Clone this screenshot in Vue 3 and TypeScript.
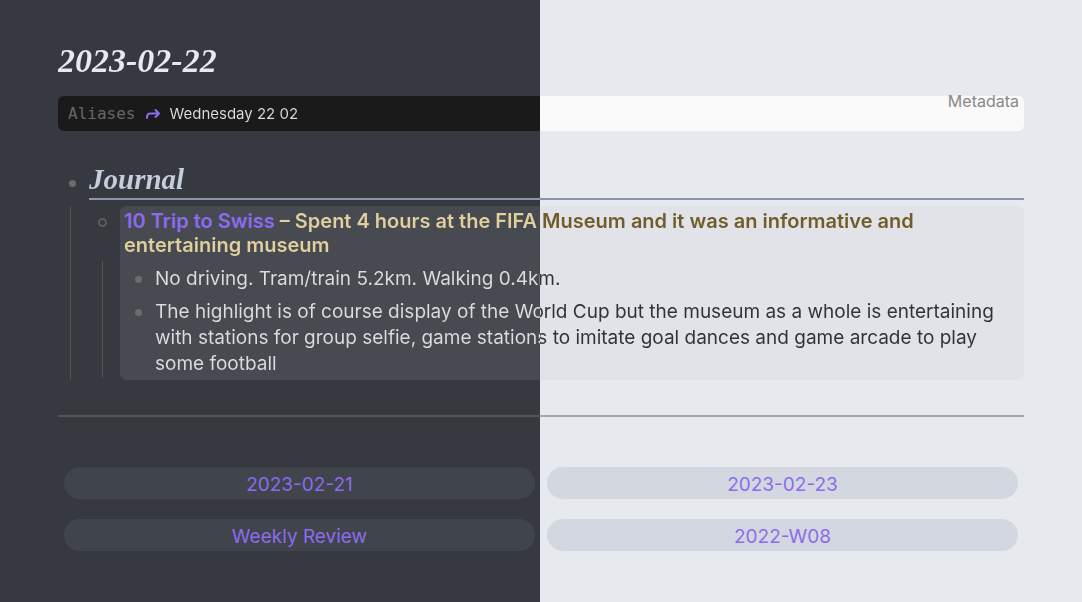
<script setup lang="ts">
interface NoteLink {
  label: string
  href: string
}

const title = '2023-02-22'
const alias = 'Wednesday 22 02'
const notes: string[] = [
  'No driving. Tram/train 5.2km. Walking 0.4km.',
  'The highlight is of course display of the World Cup but the museum as a whole is entertaining with stations for group selfie, game stations to imitate goal dances and game arcade to play some football',
]
const links: NoteLink[] = [
  { label: '2023-02-21', href: '#2023-02-21' },
  { label: '2023-02-23', href: '#2023-02-23' },
  { label: 'Weekly Review', href: '#weekly-review' },
  { label: '2022-W08', href: '#2022-w08' },
]
</script>

<template>
  <main class="page">
    <h1 class="title split-text">{{ title }}</h1>

    <section class="metadata" aria-label="Metadata">
      <dl class="property">
        <dt>Aliases</dt>
        <dd>
          <svg class="arrow" viewBox="0 0 16 16" aria-hidden="true">
            <path d="M2 12V11Q2 7.5 5.5 7.5H14M10.5 4L14 7.5L10.5 11" />
          </svg>
          <span class="split-text">{{ alias }}</span>
        </dd>
      </dl>
      <span class="metadata-label">Metadata</span>
    </section>

    <ul class="outline">
      <li>
        <div class="section-head">
          <span class="dot"></span>
          <h2><span class="split-text">Journal</span></h2>
        </div>
        <ul class="branch">
          <li class="entry">
            <div class="gutter">
              <span class="ring"></span>
              <span class="guide"></span>
            </div>
            <div class="card">
              <h3>
                <a href="#10-trip-to-swiss">10 Trip to Swiss</a>
                <span class="split-text"> – Spent 4 hours at the FIFA Museum and it was an informative and entertaining museum</span>
              </h3>
              <ul class="notes">
                <li v-for="note in notes" :key="note">
                  <span class="dot"></span>
                  <p class="split-text">{{ note }}</p>
                </li>
              </ul>
            </div>
          </li>
        </ul>
      </li>
    </ul>

    <hr />

    <nav class="links" aria-label="Related notes">
      <a v-for="link in links" :key="link.href" :href="link.href">{{ link.label }}</a>
    </nav>
  </main>
</template>

<style>
:root {
  --split: calc(50% - 1px);
}

body {
  margin: 0;
  background: linear-gradient(90deg, #36393f var(--split), #e6e9ee var(--split)) fixed;
}
</style>

<style scoped>
.page {
  box-sizing: border-box;
  min-height: 100vh;
  padding: 40px 58px 48px;
  font-family: Inter, "Liberation Sans", sans-serif;
  font-size: 19px;
  line-height: 26px;
}

h1, h2, h3, p, ul, dl, dd {
  margin: 0;
  padding: 0;
}

ul {
  list-style: none;
}

a {
  color: #8b6cef;
  text-decoration: none;
}

/* Both themes share one layout; each surface changes colour at the middle of the window. */
.split-text {
  --dark: #dcddde;
  --light: #2e3338;
  color: transparent;
  background: linear-gradient(90deg, var(--dark) var(--split), var(--light) var(--split)) fixed;
  -webkit-background-clip: text;
  background-clip: text;
}

.title {
  --dark: #e6e9f0;
  font: italic bold 34px/42px "Liberation Serif", serif;
}

.metadata {
  position: relative;
  margin-top: 14px;
  padding: 5px 10px;
  border-radius: 6px;
  background: linear-gradient(90deg, #1a1a1a var(--split), #fafafa var(--split)) fixed;
  font-size: 16px;
  line-height: 25px;
}

.property,
.property dd {
  display: flex;
  align-items: center;
}

.property dd {
  font-size: 15px;
}

.property dt {
  color: #666;
  font-family: "DejaVu Sans Mono", monospace;
}

.arrow {
  width: 16px;
  height: 16px;
  margin: 0 8px 0 10px;
  fill: none;
  stroke: #8b6cef;
  stroke-width: 2;
  stroke-linecap: round;
  stroke-linejoin: round;
}

.metadata-label {
  position: absolute;
  top: -7px;
  right: 5px;
  color: #888;
}

.outline {
  margin-top: 30px;
}

.section-head {
  display: flex;
  align-items: flex-start;
  padding-left: 11px;
}

.dot {
  flex: none;
  width: 7px;
  height: 7px;
  border-radius: 50%;
  background: #6b6b6b;
}

.section-head .dot {
  margin-top: 19px;
}

h2 {
  flex: 1;
  margin-left: 13px;
  border-bottom: 2px solid #8c95a8;
  font: italic bold 29px/37px "Liberation Serif", serif;
}

h2 .split-text {
  --dark: #c5cede;
}

.branch {
  margin: 6px 0 0 12px;
  border-left: 1px solid #57524d;
}

.entry {
  display: flex;
}

.gutter {
  box-sizing: border-box;
  display: flex;
  flex: none;
  flex-direction: column;
  align-items: center;
  width: 49px;
  padding: 12px 0 2px 14px;
}

.ring {
  box-sizing: border-box;
  width: 9px;
  height: 9px;
  border: 2px solid #5c5c5c;
  border-radius: 50%;
}

.guide {
  flex: 1;
  width: 1px;
  margin-top: 34px;
  background: #57524d;
}

.card {
  flex: 1;
  padding: 3px 4px;
  border-radius: 6px;
  background: linear-gradient(90deg, #484a52 var(--split), #e2e3e8 var(--split)) fixed;
}

h3 {
  font-size: 20px;
  font-weight: 600;
  line-height: 24px;
}

h3 .split-text {
  --dark: #e0d19c;
  --light: #6f5c28;
}

.notes {
  padding-top: 2px;
}

.notes li {
  display: flex;
  margin-top: 7px;
}

.notes .dot {
  margin: 10px 13px 0 11px;
}

hr {
  height: 2px;
  margin: 35px 0 50px;
  border: 0;
  background: linear-gradient(90deg, #5a534d var(--split), #aaa5a1 var(--split)) fixed;
}

.links {
  display: grid;
  grid-template-columns: 1fr 1fr;
  gap: 20px 12px;
  padding: 0 6px;
}

.links a {
  padding: 5px 16px 1px;
  border-radius: 16px;
  background: linear-gradient(90deg, #40444b var(--split), #d3d7e0 var(--split)) fixed;
  text-align: center;
}
</style>
